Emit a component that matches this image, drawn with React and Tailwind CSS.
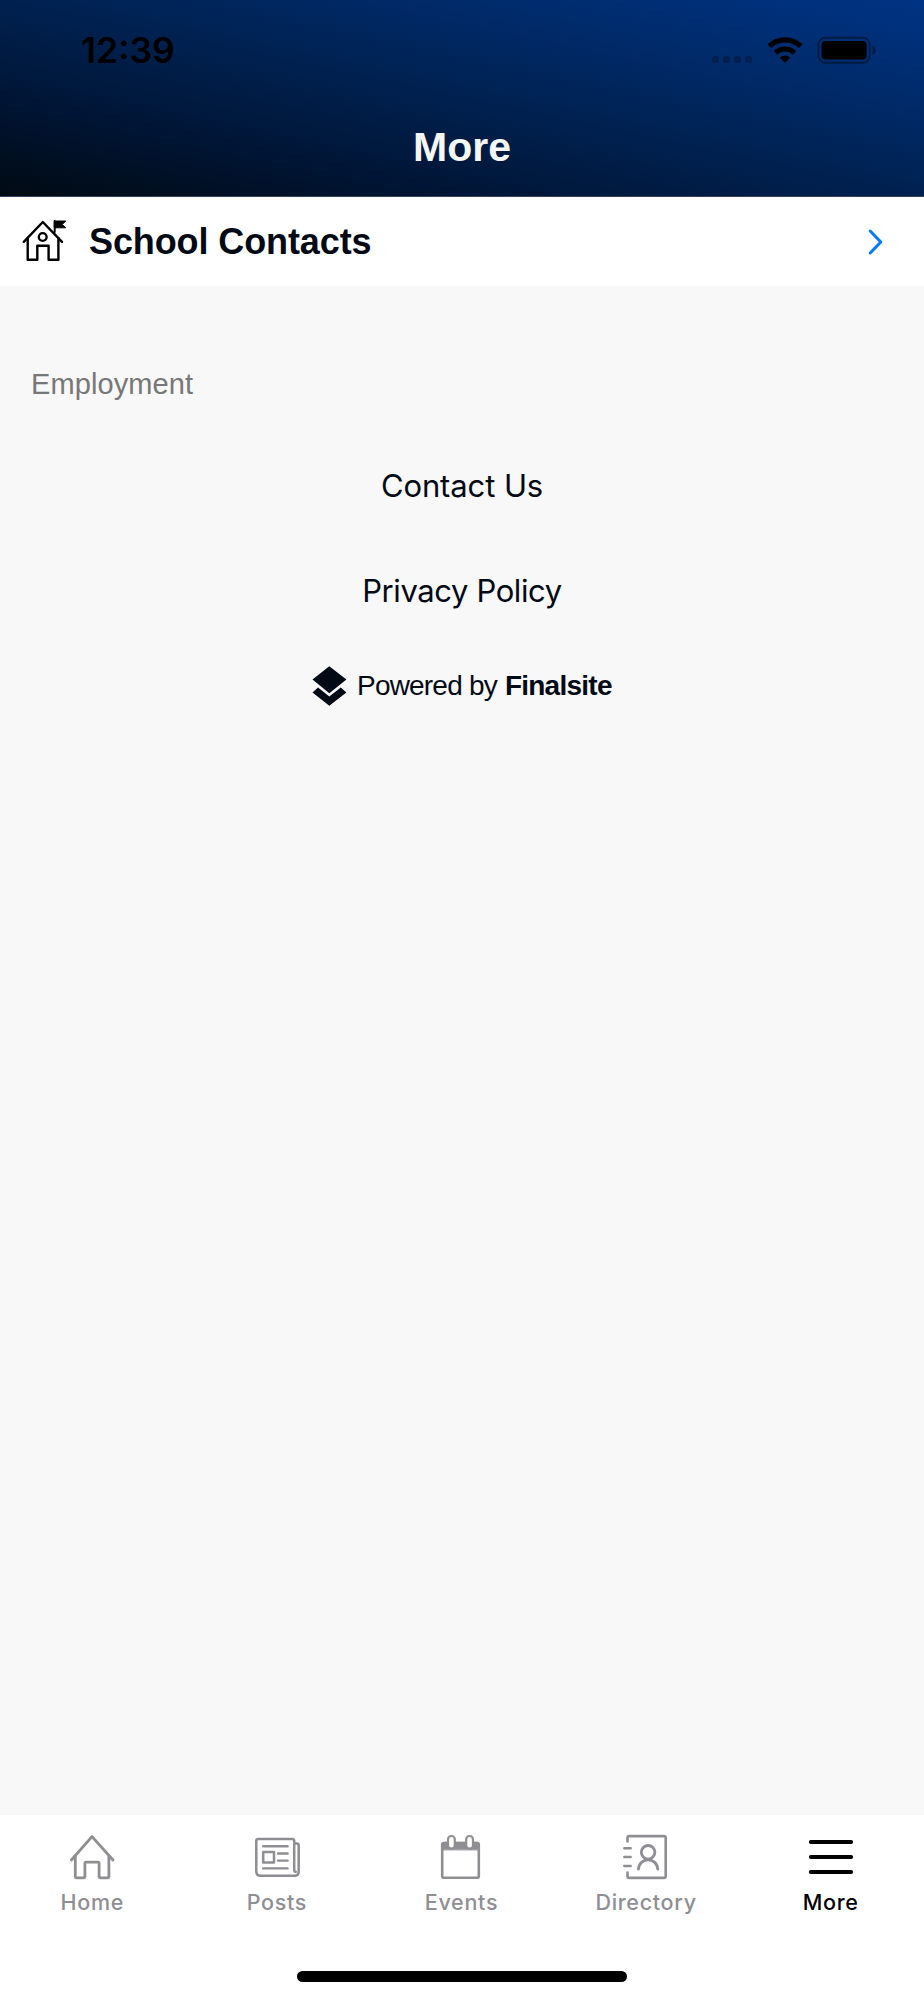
import clsx from "clsx";

const TABS = [
    { label: "Home", icon: HomeIcon },
    { label: "Posts", icon: PostsIcon },
    { label: "Events", icon: EventsIcon },
    { label: "Directory", icon: DirectoryIcon },
    { label: "More", icon: MenuIcon, active: true },
];

function TabSvg({ children }) {
    return (
        <svg
            className="w-12 h-12"
            viewBox="0 0 48 48"
            fill="none"
            stroke="currentColor"
            strokeWidth="2.8"
            strokeLinecap="round"
            strokeLinejoin="round"
        >
            {children}
        </svg>
    );
}

function HomeIcon() {
    return (
        <TabSvg>
            <path d="M3.4 27 24 3.6 45 27" />
            <path d="M7.3 23v20.2q0 1.6 1.6 1.6h6.4q1.6 0 1.6-1.6V30.6q0-1.4 1.4-1.4h11.4q1.4 0 1.4 1.4v12.6q0 1.6 1.6 1.6h6.6q1.6 0 1.6-1.6V23" />
        </TabSvg>
    );
}

function PostsIcon() {
    return (
        <TabSvg>
            <path d="M41.3 10.4h2.6q1.8 0 1.8 1.8v26.3q0 4.3-4.3 4.3H7.6q-4.3 0-4.3-4.3V7.8q0-1.8 1.8-1.8h34.3q1.8 0 1.8 1.8v28.6q0 2.4 1.6 2.4" strokeWidth="2.5" />
            <path d="M10.2 13.3h24.4M25 20.5h9.6M25 27.6h9.6M10.2 35.4h24.4" strokeWidth="2.4" />
            <path d="M10.2 19h10.8v10.4H10.2z" strokeWidth="2.5" />
        </TabSvg>
    );
}

function EventsIcon() {
    return (
        <TabSvg>
            <path d="M4.9 16.5v-5q0-2.2 2.2-2.2h33.2q2.2 0 2.2 2.2v5z" fill="currentColor" strokeWidth="1" />
            <rect x="5.2" y="10" width="36.6" height="34.8" rx="1.8" strokeWidth="2.6" />
            <rect x="11" y="3" width="6.8" height="12.6" rx="3.4" fill="white" strokeWidth="2.2" />
            <rect x="29.2" y="3" width="6.8" height="12.6" rx="3.4" fill="white" strokeWidth="2.2" />
        </TabSvg>
    );
}

function DirectoryIcon() {
    return (
        <TabSvg>
            <path d="M5.5 8.5V4.8q0-1.7 1.7-1.7H42q1.7 0 1.7 1.7v38.4q0 1.7-1.7 1.7H7.2q-1.7 0-1.7-1.7v-3.7" strokeWidth="2.6" />
            <path d="M2.4 15.2h6.2M2.4 24h6.2M2.4 33h6.2" strokeWidth="2.6" />
            <circle cx="26.1" cy="19.3" r="6.8" />
            <path d="M16.4 36.2c1.2-12.6 18.2-12.6 19.4 0" />
        </TabSvg>
    );
}

function MenuIcon() {
    return (
        <TabSvg>
            <path d="M3.8 9h40.4M3.8 24h40.4M3.8 39h40.4" strokeWidth="3.8" />
        </TabSvg>
    );
}

function SchoolIcon() {
    return (
        <svg
            className="w-12 h-12"
            viewBox="0 0 48 48"
            fill="none"
            stroke="black"
            strokeWidth="2.4"
            strokeLinejoin="round"
            strokeLinecap="round"
        >
            <path d="M3.8 23.8 22.8 4 42 23.8" />
            <path d="M7.7 20v21.8h9.6v-14h11.3v14h9.8V20" />
            <circle cx="22.7" cy="19" r="3.9" />
            <path d="M34.7 14V3" strokeWidth="2" />
            <path d="M34.7 3h11L42.3 6.4l3.4 3.4h-11z" fill="black" strokeWidth="1" />
        </svg>
    );
}

function StatusBar() {
    return (
        <div className="flex justify-between h-[104px] pl-[81px] pr-[47px]">
            <span className="mt-[25px] text-[35.5px] leading-[52px] font-semibold text-black">12:39</span>
            <div className="flex mt-[36px] h-7">
                <div className="flex gap-1 mt-[20px] mr-[15px]">
                    <span className="size-[7px] rounded-[2.5px] bg-black/25" />
                    <span className="size-[7px] rounded-[2.5px] bg-black/25" />
                    <span className="size-[7px] rounded-[2.5px] bg-black/25" />
                    <span className="size-[7px] rounded-[2.5px] bg-black/25" />
                </div>
                <svg className="w-9 h-7 mr-[14px]" viewBox="0 0 36 28" fill="none" stroke="black">
                    <path d="M2.3 10.2a22.5 22.5 0 0 1 31.4 0" strokeWidth="5.2" />
                    <path d="M8.4 16.8a14.2 14.2 0 0 1 19.2 0" strokeWidth="5" />
                    <path d="M12.8 21.4a8 8 0 0 1 10.4 0L18 27z" fill="black" stroke="none" />
                </svg>
                <svg className="w-[60px] h-7" viewBox="0 0 60 28">
                    <rect x="1.4" y="1.8" width="51.4" height="25" rx="7" fill="none" stroke="black" strokeOpacity="0.4" strokeWidth="2" />
                    <rect x="4.6" y="5" width="45" height="18.6" rx="4" fill="black" />
                    <path d="M55.6 10v8.6q3-1 3-4.3t-3-4.3z" fill="black" fillOpacity="0.45" />
                </svg>
            </div>
        </div>
    );
}

function TabBar() {
    return (
        <nav className="flex flex-col h-[185px] bg-white">
            <div className="flex pt-[18px] pr-px">
                {TABS.map(({ label, icon: Icon, active }) => (
                    <div
                        key={label}
                        className={clsx(
                            "flex flex-1 flex-col items-center",
                            active ? "text-black" : "text-[#8e8e93]",
                        )}
                    >
                        <Icon />
                        <span className="mt-[7px] text-[21.5px] leading-[29px] font-medium tracking-[0.7px]">
                            {label}
                        </span>
                    </div>
                ))}
            </div>
            <div className="mt-auto mb-[18px] mx-auto w-[330px] h-[11px] rounded-full bg-black" />
        </nav>
    );
}

export default function App() {
    return (
        <div className="flex flex-col w-[924px] h-[2000px] bg-[#f8f8f8] font-['Inter',sans-serif] text-[#020a16]">
            <header className="h-[197px] border-b border-[#34415f] bg-[linear-gradient(to_top_right,#000a12,#001535_25%,#002150_50%,#002b6b_75%,#003384)]">
                <StatusBar />
                <h1 className="text-center text-[41px] leading-[86px] font-bold text-[#f6f6f6] font-['Liberation_Sans',sans-serif]">
                    More
                </h1>
            </header>

            <div className="flex items-center h-[89px] pl-5 pr-[40px] bg-white">
                <SchoolIcon />
                <span className="ml-[21px] pt-px text-[36px] font-bold tracking-[-0.1px] font-['Liberation_Sans',sans-serif]">
                    School Contacts
                </span>
                <svg className="ml-auto w-4 h-7" viewBox="0 0 16 28" fill="none">
                    <path d="M2.2 3 12.8 14 2.2 25" stroke="#007aff" strokeWidth="3" strokeLinecap="round" strokeLinejoin="round" />
                </svg>
            </div>

            <main className="flex flex-1 flex-col">
                <h2 className="mt-[78px] pl-[31px] text-[29px] leading-10 tracking-[0.1px] text-[#777] font-['Liberation_Sans',sans-serif]">
                    Employment
                </h2>
                <p className="mt-[62px] text-center text-[31px] leading-10 tracking-[-0.1px]">Contact Us</p>
                <p className="mt-[65px] text-center text-[31px] leading-10 tracking-[-0.4px]">Privacy Policy</p>
                <div className="flex items-center mt-[55px] ml-[312px] h-10 font-['Liberation_Sans',sans-serif] text-[28px]">
                    <svg className="w-[35px] h-10" viewBox="0 0 35 40" fill="currentColor">
                        <path d="M17.3.2 34.4 13.5 17.3 27.2.5 13.5z" />
                        <path d="M6 21.6 17.3 30.4 28.8 21.6 34.4 26.4 17.3 39.8.5 26.4z" />
                    </svg>
                    <span className="ml-[10px] tracking-[-0.8px]">Powered by</span>
                    <span className="ml-2 font-bold tracking-[-0.75px]">Finalsite</span>
                </div>
            </main>

            <TabBar />
        </div>
    );
}
